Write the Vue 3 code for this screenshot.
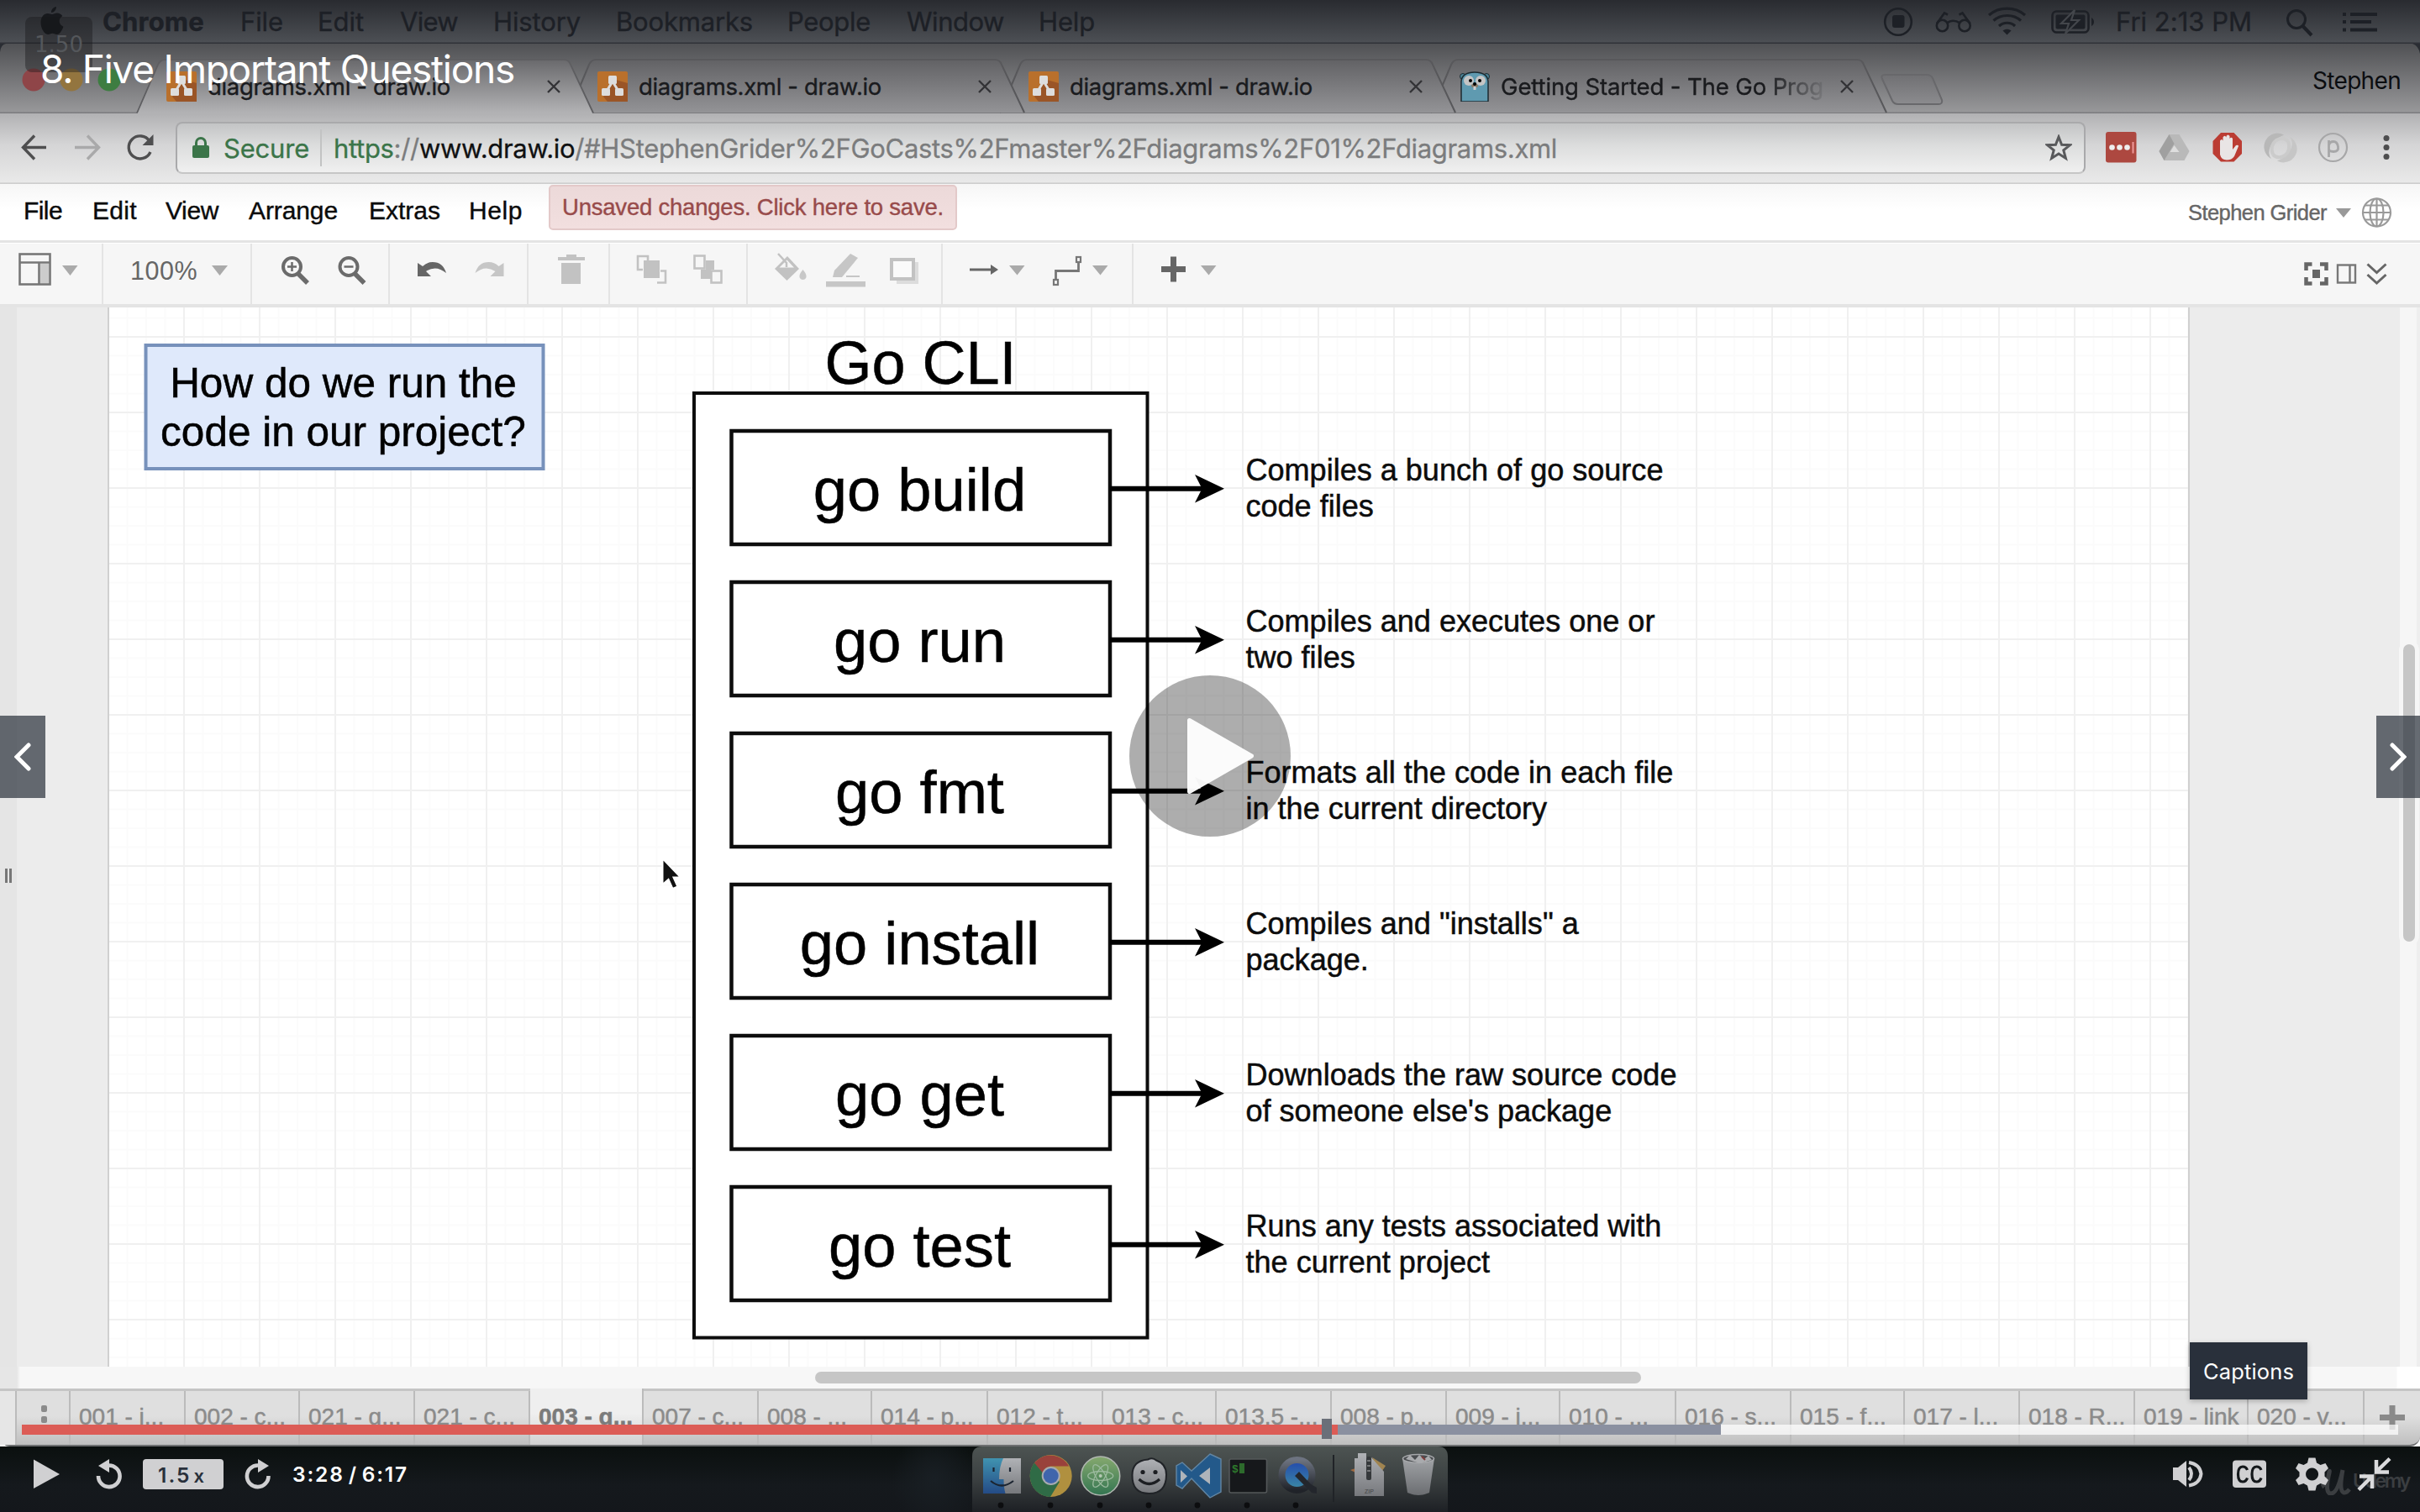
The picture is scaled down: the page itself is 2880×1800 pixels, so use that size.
<script setup>
// Sets the tracking of a label so that it spans the given width in pixels.
const vTrack = {
  mounted(el, { value }) {
    const natural = el.getBoundingClientRect().width
    el.style.letterSpacing = `${(value - natural) / el.textContent.length}px`
  },
}

const macMenus = [
  { label: 'Chrome', w: 164, t: 121, bold: true },
  { label: 'File', w: 92, t: 51 },
  { label: 'Edit', w: 98, t: 55 },
  { label: 'View', w: 111, t: 69 },
  { label: 'History', w: 146, t: 104 },
  { label: 'Bookmarks', w: 204, t: 163 },
  { label: 'People', w: 142, t: 99 },
  { label: 'Window', w: 157, t: 116 },
  { label: 'Help', w: 100, t: 67 },
]

const tabs = [
  { title: 'diagrams.xml - draw.io', t: 289, icon: 'drawio', w: 513 },
  { title: 'diagrams.xml - draw.io', t: 289, icon: 'drawio', w: 513 },
  { title: 'diagrams.xml - draw.io', t: 289, icon: 'drawio', w: 513 },
  { title: 'Getting Started - The Go Prog', t: 384, icon: 'gopher', w: 513, fade: true },
]

const appMenus = [
  { label: 'File', w: 82, t: 46 },
  { label: 'Edit', w: 87, t: 53 },
  { label: 'View', w: 99, t: 63 },
  { label: 'Arrange', w: 143, t: 106 },
  { label: 'Extras', w: 119, t: 85 },
  { label: 'Help', w: 92, t: 64 },
]

const commands = [
  { name: 'go build', info: ['Compiles a bunch of go source', 'code files'] },
  { name: 'go run', info: ['Compiles and executes one or', 'two files'] },
  { name: 'go fmt', info: ['Formats all the code in each file', 'in the current directory'] },
  { name: 'go install', info: ['Compiles and "installs" a', 'package.'] },
  { name: 'go get', info: ['Downloads the raw source code', "of someone else's package"] },
  { name: 'go test', info: ['Runs any tests associated with', 'the current project'] },
]

const sheets = [
  ['001 - i...', 137], ['002 - c...', 136], ['021 - g...', 137], ['021 - c...', 137],
  ['003 - g...', 135, true], ['007 - c...', 137], ['008 - ...', 135], ['014 - p...', 138],
  ['012 - t...', 137], ['013 - c...', 135], ['013.5 -...', 137], ['008 - p...', 137],
  ['009 - i...', 135], ['010 - ...', 138], ['016 - s...', 137], ['015 - f...', 135],
  ['017 - l...', 137], ['018 - R...', 137], ['019 - link', 135], ['020 - v...', 138],
]
const dockDots = [1191, 1250, 1309, 1367, 1425, 1484, 1542]
</script>

<template>
  <div class="player">
    <header class="macbar">
      <svg class="apple" viewBox="0 0 28 35"><path d="M19 1c.3 3.600-2.800 7-6 7-.3-3.400 2.600-6.600 6-7zM14 10c1.700 0 3.300-1.500 6-1.500 2.400 0 4.800 1.200 6.300 3.500-5.400 3.300-4.500 10.300 1.100 12.700C26 29 23 34 19.800 34c-2.200 0-2.900-1.300-5.400-1.300S11 34 9 34C4.600 34 .5 26.500.5 19.800.5 13 4.600 9 8.500 9c2.500 0 4 1 5.500 1z" /></svg>
      <div v-for="m in macMenus" :key="m.label" class="mac-item" :class="{ bold: m.bold }" :style="{ width: m.w + 'px' }">
        <span v-track="m.t">{{ m.label }}</span>
      </div>
      <svg class="status" viewBox="2240 0 260 50" fill="none" stroke="#1d2026" stroke-width="2.600">
        <circle cx="2259" cy="25" r="15.800" /><rect x="2252" y="17" width="14.500" height="15" rx="3" fill="#1d2026" stroke="none" />
        <circle cx="2311.500" cy="29.500" r="6.700" /><circle cx="2338" cy="29.500" r="6.700" />
        <path d="M2305 27 2314 14.500l4 2M2344.500 27 2335.500 14.500l-4 2M2318 26c3-3 10-3 13.500 0" />
        <path d="M2367 17c12-10.500 31-10.500 43 0M2372.500 23.500c9-8 23.500-8 32.500 0M2379 30c5.500-5 14-5 19 0" stroke-width="3.200" />
        <path d="M2383.500 35.500c3-2.500 7-2.500 10 0l-5 5z" fill="#1d2026" stroke="none" />
        <rect x="2442.500" y="12.500" width="43" height="25" rx="5" /><rect x="2446.500" y="16.500" width="35" height="17" rx="2" fill="#1d2026" stroke="none" />
        <path d="M2489 20c4 2 4 8 0 10z" fill="#1d2026" stroke="none" />
        <path d="M2469 11 2453 27h9l-4 12 16-16h-9z" fill="#1d2026" stroke="#43464b" stroke-width="2.200" />
      </svg>
      <div class="clock"><span v-track="162">Fri 2:13 PM</span></div>
      <svg class="status-end" viewBox="2720 0 112 50" fill="none" stroke="#1d2026" stroke-width="3">
        <circle cx="2733" cy="22" r="10.500" /><path d="M2740.500 30 2751 41" stroke-width="4" />
        <path d="M2788 16h4M2797 16h32M2788 25h4M2797 25h25M2788 34.500h4M2797 34.500h32" stroke-width="4" />
      </svg>
    </header>

    <div class="tabstrip">
      <svg class="tab-shapes" viewBox="0 52 2880 83">
        <defs>
          <linearGradient id="act" gradientUnits="userSpaceOnUse" x1="0" y1="70" x2="0" y2="135"><stop offset="0" stop-color="#68686b" /><stop offset="1" stop-color="#b3b3b5" /></linearGradient>
          <linearGradient id="ina" gradientUnits="userSpaceOnUse" x1="0" y1="70" x2="0" y2="135"><stop offset="0" stop-color="#616164" /><stop offset="1" stop-color="#949497" /></linearGradient>
        </defs>
        <path d="M0 52h7Q1 53 0 62zM2880 52h-9Q2878 54 2880 64z" fill="#2a2d33" />
        <path d="M0 134.500H2880" stroke="#7b7b7e" stroke-width="2" />
        <g stroke="#58585b" stroke-width="2" fill="url(#ina)">
          <path d="M1703 134 1727 77Q1730 71 1735 71H2210Q2216 71 2218 77L2245 134" />
          <path d="M1190 134 1214 77Q1217 71 1222 71H1697Q1703 71 1705 77L1732 134" />
          <path d="M677 134 701 77Q704 71 709 71H1184Q1190 71 1192 77L1219 134" />
          <path d="M2243 89H2293q5 0 7 4l11 26q1 5-4 5H2259q-5 0-7-4l-12-26q-2-5 3-5z" stroke="#68686b" />
        </g>
        <path d="M163 135.500 188 77Q191 71 196 71H671Q677 71 679 77L706 135.500z" fill="url(#act)" />
        <path d="M163 134.500 188 77Q191 71 196 71H671Q677 71 679 77L706 134.500" fill="none" stroke="#5e5e61" stroke-width="1.800" />
        <circle cx="40" cy="95" r="13.500" fill="#8f4548" /><circle cx="85" cy="95" r="13.500" fill="#93753f" /><circle cx="130" cy="95" r="13.500" fill="#3d7d41" />
      </svg>
      <div class="tabs">
        <div v-for="(tab, i) in tabs" :key="i" class="tab" :style="{ width: tab.w + 'px' }">
          <svg v-if="tab.icon === 'drawio'" class="fav" viewBox="0 0 36 36">
            <rect width="36" height="36" rx="2" fill="#b9702c" /><path d="M36 14v22H12l-5-6 15-20z" fill="#9a5527" />
            <path d="M18 12 10 25M18 12l8 13" stroke="#ddd" stroke-width="3" /><rect x="13" y="5" width="10" height="10" rx="1.500" fill="#ddd" /><rect x="5" y="20" width="10" height="9" rx="1.500" fill="#ddd" /><rect x="21" y="20" width="10" height="9" rx="1.500" fill="#ddd" />
          </svg>
          <svg v-else class="fav" viewBox="0 0 36 36">
            <circle cx="4" cy="6" r="3.500" fill="#4b8396" stroke="#1c2a30" /><circle cx="32" cy="6" r="3.500" fill="#4b8396" stroke="#1c2a30" />
            <path d="M2 36V12Q3 1 18 1t16 11v24z" fill="#5f9ab0" stroke="#1c2a30" stroke-width="1.500" />
            <circle cx="11" cy="11" r="6" fill="#c5c5c5" /><circle cx="25" cy="11" r="6" fill="#c5c5c5" /><circle cx="13" cy="11" r="2" /><circle cx="24" cy="11" r="2" />
            <ellipse cx="18" cy="17" rx="4" ry="2.500" fill="#8b7c6b" /><circle cx="18" cy="15" r="2" /><rect x="16.500" y="18" width="3" height="4" fill="#ccc" />
          </svg>
          <div class="tab-title" :class="{ fade: tab.fade }"><span v-track="tab.t">{{ tab.title }}</span></div>
          <svg class="close" viewBox="0 0 16 16"><path d="M1 1 15 15M15 1 1 15" stroke="#333336" stroke-width="2.400" /></svg>
        </div>
      </div>
      <div class="profile"><span v-track="105">Stephen</span></div>
    </div>

    <div class="address">
      <svg class="nav" viewBox="20 135 170 82" fill="none">
        <path d="M55 175.500H29M41 161.500 27.500 175.500 41 189.500" stroke="#4f4f50" stroke-width="3.400" />
        <path d="M89 175.500h27M104 161.500 117.500 175.500 104 189.500" stroke="#a9a9aa" stroke-width="3.400" />
        <path d="M178 168a13.500 13.500 0 1 0 1 13" stroke="#4f4f50" stroke-width="3.400" /><path d="M182.500 160v13h-13z" fill="#4f4f50" />
      </svg>
      <div class="field">
        <svg class="lock" viewBox="0 0 20 26"><path d="M4.500 12V7a5.500 5.500 0 0 1 11 0v5" fill="none" stroke="#3b7549" stroke-width="3" /><rect y="10" width="20" height="15" rx="2" fill="#3b7549" /></svg>
        <div class="secure"><span v-track="102">Secure</span></div>
        <div class="url"><span v-track="1456"><b class="g">https</b>://<b class="k">www.draw.io</b>/#HStephenGrider%2FGoCasts%2Fmaster%2Fdiagrams%2F01%2Fdiagrams.xml</span></div>
        <svg class="star" viewBox="0 0 32 32"><path d="M16 3l3.600 9.200 9.900.5-7.700 6.200 2.600 9.600L16 23.100 7.600 28.500l2.600-9.600L2.500 12.700l9.900-.5z" fill="none" stroke="#58595b" stroke-width="3" /></svg>
      </div>
      <svg class="exts" viewBox="2500 135 350 82">
        <rect x="2506" y="157" width="36.500" height="36.500" rx="3" fill="#ad4840" /><g fill="#eee"><circle cx="2513.500" cy="175.500" r="3.300" /><circle cx="2522.500" cy="175.500" r="3.300" /><circle cx="2531.500" cy="175.500" r="3.300" /></g><path d="M2538.500 169v13.500" stroke="#e99" stroke-width="2" />
        <path d="M2581.500 160h12l12 20-6 11h-24l-6-11z" fill="#b9b9b9" /><path d="M2581.500 160 2587.500 171 2575.500 191 2569.500 180z" fill="#a0a0a0" /><path d="M2587.500 173l6 8h-11z" fill="#dedede" />
        <path d="M2643 158h15.500l9.500 10v15l-9.500 9.500H2643l-9.500-9.500v-15z" fill="#bb3c33" />
        <path d="M2642 184v-16.500q2-3 3.500 0v-4q2-3.500 4 0v-1.500q2-3 4 0v3q2-2.500 3.500 0V178l4-5q3-1 3 1l-5 12q-3 4.500-9 4.500-6.500 0-8-6.500z" fill="#e9e5e5" />
        <path d="M2718 160.500a15.500 15.500 0 0 0-15 28.500q-5-6-1-15 4-8 16-13.500z" fill="#b8b8b8" /><path d="M2710 191.500a15.500 15.500 0 0 0 15-28.500q5 6 1 15-4 8-16 13.500z" fill="#c6c6c6" /><path d="M2705 184q-4-11 4-17 8-5 14 1M2723 168q4 11-4 17-8 5-14-1" fill="none" stroke="#cbcbcb" stroke-width="4" />
        <circle cx="2776.500" cy="175.500" r="16.500" fill="none" stroke="#a7a7a8" stroke-width="2.200" />
        <path d="M2771.500 187v-20M2771.500 173q1-4.500 5.500-4.500t5.500 6-5.500 6-5.500-4.500" fill="none" stroke="#a7a7a8" stroke-width="2.800" />
        <g fill="#4d4d4e"><circle cx="2840" cy="164.500" r="3.500" /><circle cx="2840" cy="175.500" r="3.500" /><circle cx="2840" cy="186.500" r="3.500" /></g>
      </svg>
    </div>

    <div class="appmenu">
      <div v-for="m in appMenus" :key="m.label" class="app-item" :style="{ width: m.w + 'px' }"><span v-track="m.t">{{ m.label }}</span></div>
      <div class="unsaved"><span v-track="454">Unsaved changes. Click here to save.</span></div>
      <div class="user"><span v-track="165">Stephen Grider</span></div>
      <svg class="globe" viewBox="2778 234 70 40"><path d="M2779 249h18l-9 11z" fill="#999" />
        <g fill="none" stroke="#9a9a9a" stroke-width="2.200"><circle cx="2827.500" cy="254" r="16.500" /><ellipse cx="2827.500" cy="254" rx="8" ry="16.500" /><path d="M2827.500 237v34M2811 254h33M2813.500 245.500h28M2813.500 262.500h28" /></g></svg>
    </div>

    <div class="toolbar">
      <svg style="width: 123px" viewBox="0 290 123 72"><g fill="none" stroke="#777" stroke-width="2.600"><rect x="23.500" y="302.500" width="36" height="36" /><path d="M23 312.500h37M46.500 312v27" /></g><path d="M48 314h10v23H48z" fill="#ccc" /><path d="M74 316h18.500l-9 12z" fill="#aaa" /></svg>
      <div class="zoom"><span v-track="80">100%</span><svg viewBox="0 0 19 12"><path d="M0 0h19l-9.500 12z" fill="#aaa" /></svg></div>
      <svg style="width: 164px" viewBox="300 290 164 72" fill="none" stroke="#6b6b6b">
        <circle cx="347.500" cy="317.500" r="10.500" stroke-width="4" /><path d="M355 326 366 337" stroke-width="5.500" /><path d="M342 317.500h11M347.500 312v11" stroke-width="2.500" />
        <circle cx="415" cy="317.500" r="10.500" stroke-width="4" /><path d="M422.500 326 433.500 337" stroke-width="5.500" /><path d="M409.500 317.500h11" stroke-width="2.500" />
      </svg>
      <svg style="width: 165px" viewBox="464 290 165 72">
        <path d="M497 313v16h16l-6-6q12-8 24 2-4-13-16-13-7 0-12 5z" fill="#666" /><path d="M599.500 313v16h-16l6-6q-12-8-24 2 4-13 16-13 7 0 12 5z" fill="#c6c6c6" />
      </svg>
      <svg style="width: 97px" viewBox="629 290 97 72" fill="#c2c2c2"><path d="M674 306v-3h12v3h10v4h-32v-4zM668 313h23v25h-23z" /></svg>
      <svg style="width: 164px" viewBox="726 290 164 72">
        <g fill="none" stroke="#c2c2c2" stroke-width="2.600"><path d="M765 321h-6v-16h12v5M782 336.500h10v-14h-6" /><rect x="826.500" y="304.500" width="12" height="15" /><rect x="846.500" y="322.500" width="12" height="14" /></g>
        <rect x="766" y="310" width="19" height="21" fill="#c2c2c2" /><path d="M840 310h10v11h-4v11h-12v-11h6z" fill="#c2c2c2" />
      </svg>
      <svg style="width: 232px" viewBox="890 290 232 72">
        <path d="M937 305 951 320 936.500 334 922 320z" fill="#c2c2c2" /><path d="M936.500 309.500 945 318.500H927.500z" fill="#f6f6f6" /><path d="M926 302 936 313v5" fill="none" stroke="#c2c2c2" stroke-width="2.500" /><path d="M955.500 321q5 6 4 9t-4 3-4-3 4-9z" fill="#c8c8c8" />
        <path d="M1012 302 1021 307 1002 330 991 330 993 322z" fill="#c6c6c6" /><path d="M983 335h47v6.500h-47zM1007 328h16v2h-16z" fill="#c6c6c6" />
        <path d="M1067 312h26v26h-26z" fill="#dcdcdc" /><rect x="1061" y="309" width="26" height="23" fill="#fafafa" stroke="#c2c2c2" stroke-width="4" />
      </svg>
      <svg style="width: 227px" viewBox="1122 290 227 72">
        <path d="M1154 321h26" stroke="#666" stroke-width="3" /><path d="M1188 321l-9-6v12z" fill="#666" /><path d="M1201 316h18.500l-9 11.500zM1300 316h18.500l-9 11.500z" fill="#aaa" />
        <path d="M1256.500 333v-10.500h27V312" fill="none" stroke="#777" stroke-width="2.800" /><g fill="#f6f6f6" stroke="#777" stroke-width="2.200"><rect x="1254" y="333" width="5" height="6" /><rect x="1281" y="306" width="5" height="6" /></g>
      </svg>
      <svg class="plain" style="width: 120px" viewBox="1349 290 120 72"><path d="M1382 320.500h29M1396.500 305.500v30" stroke="#666" stroke-width="7" /><path d="M1429 316h18.500l-9 11.500z" fill="#aaa" /></svg>
      <svg class="plain right" viewBox="2740 290 140 72">
        <g fill="none" stroke="#666" stroke-width="4.500"><path d="M2744.500 322v-7.500h7M2761 314.500h7.500v7.500M2768.500 330v7.500h-7.500M2751.500 337.500h-7v-7.500" /></g><rect x="2752" y="321" width="9" height="10" fill="#666" />
        <g fill="none" stroke="#777" stroke-width="2.400"><rect x="2782" y="315.500" width="21" height="21" /><path d="M2796.500 315v22" /></g><path d="M2817.500 314.500l11 10 11-10M2817.500 327l11 10 11-10" fill="none" stroke="#666" stroke-width="3" />
      </svg>
    </div>

    <main class="workspace">
      <div class="gutter"><i></i><i></i></div>
      <div class="margin"></div>
      <div class="page">
        <svg class="diagram" viewBox="130 366 2474 1261">
          <rect x="173.500" y="411" width="473" height="147" fill="#dfe9fb" stroke="#7791bb" stroke-width="4" />
          <g font-size="49.500" text-anchor="middle"><text x="408.500" y="472.500">How do we run the</text><text x="408.500" y="531">code in our project?</text></g>
          <rect x="826" y="468" width="539.500" height="1124.500" fill="#fff" stroke="#0d0d0d" stroke-width="4" />
          <text x="1095.500" y="456.500" font-size="72" text-anchor="middle">Go CLI</text>
          <g v-for="(c, i) in commands" :key="c.name" :transform="`translate(0 ${i * 180})`">
            <rect x="870.500" y="513" width="450.500" height="135" fill="#fff" stroke="#0d0d0d" stroke-width="4.500" />
            <text x="1094.500" y="608" font-size="72.300" text-anchor="middle">{{ c.name }}</text>
            <path d="M1321 581.800h110" stroke="#000" stroke-width="6" /><path d="M1457 581.800 1422 598.500 1430.500 581.800 1422 565z" />
            <g font-size="36.060" class="note"><text x="1482.500" y="571.800">{{ c.info[0] }}</text><text x="1482.500" y="614.800">{{ c.info[1] }}</text></g>
          </g>
          <path d="M788.500 1022v31l7-6 5 11 6-2.500-5-11h8.500z" fill="#111" stroke="#fff" stroke-width="2" />
        </svg>
      </div>
      <div class="margin wide"></div>
      <div class="vscroll"><div class="vthumb"></div></div>
    </main>
    <div class="hscroll"><div class="hthumb"></div></div>

    <nav class="sheets">
      <div class="sheet-menu"><i></i><i></i></div>
      <div v-for="(s, i) in sheets" :key="i" class="sheet" :class="{ active: s[2] }" :style="{ width: s[1] + 'px' }">{{ s[0] }}</div>
      <svg class="add" viewBox="0 0 66 66"><path d="M18 31.500h30M33 17v29" stroke="#8a8a8a" stroke-width="7" /></svg>
    </nav>

    <footer class="desktop">
      <svg class="dock" viewBox="1157 1722 566 78">
        <defs>
          <linearGradient id="dk" x1="0" y1="0" x2="0" y2="1"><stop offset="0" stop-color="#4d5452" /><stop offset=".5" stop-color="#3b4041" /><stop offset="1" stop-color="#1d2024" /></linearGradient>
          <linearGradient id="fb" x1="0" y1="0" x2="0" y2="1"><stop offset="0" stop-color="#4093b0" /><stop offset="1" stop-color="#244b86" /></linearGradient>
          <linearGradient id="at" x1="0" y1="0" x2="0" y2="1"><stop offset="0" stop-color="#86a96f" /><stop offset="1" stop-color="#337551" /></linearGradient>
          <linearGradient id="gr" x1="0" y1="0" x2="0" y2="1"><stop offset="0" stop-color="#b0b2b6" /><stop offset="1" stop-color="#76787c" /></linearGradient>
          <linearGradient id="qt" x1="0" y1="0" x2="0" y2="1"><stop offset="0" stop-color="#6d7380" /><stop offset="1" stop-color="#202329" /></linearGradient>
          <linearGradient id="qi" x1="0" y1="0" x2="0" y2="1"><stop offset="0" stop-color="#2347ad" /><stop offset="1" stop-color="#3c8ca4" /></linearGradient>
        </defs>
        <path d="M1157 1800v-66q0-12 12-12h542q12 0 12 12v66z" fill="url(#dk)" />
        <rect x="1170" y="1736" width="45" height="42" fill="url(#fb)" /><path d="M1194 1736h21v42h-18.500q-2-7-2-17h-5.500q0-15 5-25z" fill="url(#gr)" />
        <path d="M1182.500 1747v5M1202 1747v5M1179 1763q13 11 27 0" fill="none" stroke="#1b2430" stroke-width="2.200" />
        <circle cx="1250.700" cy="1757" r="25" fill="#b0903f" /><path d="M1250.700 1757 1231 1741.500a25 25 0 0 0 19 40.500l11-18z" fill="#2f6b46" /><path d="M1231 1741.500a25 25 0 0 1 41 4h-22q-7 1-9 8z" fill="#99413b" /><circle cx="1250.700" cy="1757" r="11" fill="#a7aab0" /><circle cx="1250.700" cy="1757" r="9" fill="#3f65ac" />
        <circle cx="1309.700" cy="1757" r="23" fill="url(#at)" stroke="#b0b7b0" stroke-width="1.600" /><g fill="none" stroke="#9dbba0" stroke-width="1.300"><ellipse cx="1309.700" cy="1757" rx="15" ry="5.500" /><ellipse cx="1309.700" cy="1757" rx="15" ry="5.500" transform="rotate(60 1309.700 1757)" /><ellipse cx="1309.700" cy="1757" rx="15" ry="5.500" transform="rotate(120 1309.700 1757)" /></g><circle cx="1309.700" cy="1757" r="2" fill="#b5c9b5" />
        <path d="M1366 1737.500q6-3 10 1 12 4 12 17 0 22.500-20.500 22.500T1347.500 1756q0-17 18.500-18.500z" fill="url(#gr)" stroke="#202327" stroke-width="2" /><circle cx="1360" cy="1752.500" r="2.600" fill="#1c1e22" /><circle cx="1375" cy="1752.500" r="2.600" fill="#1c1e22" /><path d="M1355.500 1761q12 11 24.500 0" fill="none" stroke="#1c1e22" stroke-width="3.200" />
        <path d="M1440 1731l13 6v39l-13 7-22-23-11 12-7-4v-23l7-4 11 10z" fill="#23598a" stroke="#6286a4" stroke-width="1.400" /><path d="M1405 1750v15l8-7.500zM1440 1747v20l-13-10z" fill="#afb4ba" />
        <rect x="1463" y="1737" width="44.500" height="40" rx="2" fill="#16181b" stroke="#54585a" stroke-width="1.600" /><text x="1466" y="1753" class="term">$</text><rect x="1475" y="1742" width="6" height="12" fill="#2d6b2c" />
        <circle cx="1543.500" cy="1756" r="18" fill="url(#qi)" stroke="url(#qt)" stroke-width="8" /><path d="M1541 1757l20 20 6 1v-7l-7-4-14-15z" fill="#23262c" />
        <path d="M1587 1732v56" stroke="#202327" stroke-width="2" />
        <path d="M1633 1735l16 10-8 12z" fill="#a08450" /><path d="M1607 1750l6-2v5z" fill="#a06a40" /><path d="M1612 1736h4v-6h10v5h6l15 17v29h-35z" fill="url(#gr)" /><rect x="1626" y="1734" width="6" height="28" rx="2" fill="#35383b" /><path d="M1627 1739h4M1627 1745h4M1627 1751h4" stroke="#8a8c8e" stroke-width="1.400" /><text x="1624" y="1778" class="zip">ZIP</text>
        <path d="M1669 1736h38l-6 41q-13 6-26 0z" fill="url(#gr)" opacity=".85" /><ellipse cx="1688" cy="1736.500" rx="18.500" ry="5" fill="#4a4d50" stroke="#a5a7aa" stroke-width="1.600" /><path d="M1673 1737l5-5 6 6 5-6 6 5 5-4 4 5-14 4z" fill="#a9abae" /><path d="M1692 1734l4 4" stroke="#7d3c3c" stroke-width="2" />
        <circle v-for="x in dockDots" :key="x" :cx="x" cy="1792" r="3.400" fill="#0c0d0f" />
      </svg>
    </footer>

    <!-- video player overlay -->
    <div class="speed-badge"><span v-track="58">1.50</span></div>
    <h1 class="title"><span v-track="564">8. Five Important Questions</span></h1>
    <svg class="bigplay" viewBox="0 0 192 192"><circle cx="96" cy="96" r="96" fill="rgba(0,0,0,.32)" /><path d="M71.500 53.500 145.500 96 71.500 138.500z" fill="#fff" stroke="#fff" stroke-width="5" stroke-linejoin="round" opacity=".96" /></svg>
    <button class="side prev"><svg viewBox="0 0 20 34"><path d="M17 3 3 17 17 31" /></svg></button>
    <button class="side next"><svg viewBox="0 0 20 34"><path d="M3 3 17 17 3 31" /></svg></button>
    <div class="tooltip"><span v-track="108">Captions</span></div>
    <div class="progress"><div class="buffered"></div><div class="played"></div><div class="handle"></div></div>

    <div class="controls">
      <svg style="width: 130px" viewBox="40 1722 130 66">
        <path d="M40 1737.500 71 1755 40 1772z" fill="#d0d0d2" />
        <path d="M117 1757a12.800 12.800 0 1 0 12.500-12.500" fill="none" stroke="#d0d0d2" stroke-width="4.600" /><path d="M130 1737v16l-13-8z" fill="#d0d0d2" />
      </svg>
      <div class="rate"><span v-track="57">1.5<small>x</small></span></div>
      <svg style="width: 82px" viewBox="266 1722 82 66">
        <path d="M319.500 1757a12.800 12.800 0 1 1-12.500-12.500" fill="none" stroke="#d0d0d2" stroke-width="4.600" /><path d="M307 1737v16l13-8z" fill="#d0d0d2" />
      </svg>
      <div class="time"><span v-track="138">3:28 / 6:17</span></div>
      <div class="udemy"><svg viewBox="0 0 40 34"><path d="M3 24q7-4 9-18 1-3-1 6-4 20 3 20 8 0 14-28-4 22 0 26 3 3 8-3" fill="none" stroke="#3b3e41" stroke-width="5" /></svg><span v-track="67">Udemy</span></div>
      <svg class="icons" viewBox="2580 1722 270 66">
        <path d="M2586 1747h6l10-8v31l-10-8h-6z" fill="#d0d0d2" /><g fill="none" stroke="#d0d0d2"><path d="M2605 1747q6 7.500 0 15" stroke-width="4" /><path d="M2605 1741q13 2 14.500 13.500-1.500 12-14.500 14" stroke-width="4" /></g>
        <rect x="2657" y="1738.500" width="40" height="32.500" rx="4" fill="#d0d0d2" /><path d="M2674.500 1750q-1.500-4-5.500-4-5.500 0-5.500 9t5.500 9q4 0 5.500-4.500M2691 1750q-1.500-4-5.500-4-5.500 0-5.500 9t5.500 9q4 0 5.500-4.500" fill="none" stroke="#14181b" stroke-width="3.200" />
        <path fill-rule="evenodd" d="M2747.500 1735.500h8l1.500 6 4.500 2.500 6-2 3.500 6-4.500 4.500v5l4.500 4.500-3.500 6-6-2-4.500 2.500-1.500 6h-8l-1.500-6-4.500-2.500-6 2-3.500-6 4.500-4.500v-5l-4.500-4.500 3.500-6 6 2 4.500-2.500zM2751.500 1747.500a7.500 7.500 0 1 0 .1 0z" fill="#d0d0d2" />
        <g fill="none" stroke="#dadadc" stroke-width="4.500"><path d="M2844 1736.500 2829 1751M2828 1738v14.500h15M2807 1773.500 2822 1758.500M2808 1757.500h15V1772" /></g>
      </svg>
    </div>
  </div>
</template>

<style>
html, body { margin: 0; background: #000; }
</style>

<style scoped>
.player { position: relative; width: 2880px; height: 1800px; overflow: hidden; display: flex; flex-direction: column; background: #fff; font-family: Inter, "Liberation Sans", sans-serif; white-space: nowrap; }
.player > * { flex: none; box-sizing: border-box; }
svg { display: block; flex: none; }

.macbar { height: 52px; display: flex; align-items: center; padding-bottom: 1px; background: linear-gradient(#292b30, #4c4f54 50px, #303238 51px); color: #1d2026; font-size: 31px; line-height: 50px; }
.apple { width: 28px; height: 35px; margin: 0 46px 3px 48px; fill: #17191d; }
.mac-item { flex: none; -webkit-text-stroke: .4px #1d2026; }
.mac-item.bold { font-weight: 700; }
.status { width: 260px; height: 50px; margin-left: 904px; }
.clock { width: 202px; margin-left: 18px; -webkit-text-stroke: .4px #1d2026; }
.status-end { width: 112px; height: 50px; }

.tabstrip { position: relative; height: 83px; background: linear-gradient(#505154, #99999b); display: flex; }
.tab-shapes { position: absolute; inset: 0; width: 2880px; height: 83px; }
.tabs { position: relative; display: flex; margin: 19px 0 0 198px; width: 2052px; height: 64px; }
.tab { display: flex; align-items: center; color: #1a1b1e; font-size: 27.500px; }
.fav { width: 36px; height: 36px; margin-right: 13px; }
.tab-title { width: 404px; overflow: hidden; line-height: 40px; -webkit-text-stroke: .4px #1a1b1e; }
.tab-title.fade { -webkit-mask-image: linear-gradient(90deg, #000 315px, transparent 392px); mask-image: linear-gradient(90deg, #000 315px, transparent 392px); }
.close { width: 16px; height: 16px; }
.profile { position: relative; margin: 24px 0 0 502px; height: 40px; line-height: 40px; font-size: 28px; color: #0b0d10; }

.address { height: 84px; display: flex; align-items: center; padding-left: 20px; padding-bottom: 2px; background: linear-gradient(#b1b1b3, #d5d5d6 45%, #e9e9e9 82px, #c6c6c6 83px); border-bottom: 1px solid #cdcdcd; }
.nav { width: 170px; height: 82px; margin-right: 19px; }
.field { box-sizing: border-box; width: 2273px; height: 62px; border: 2px solid #a9a9ab; border-bottom-color: #c6c6c6; border-radius: 8px; display: flex; align-items: center; padding-left: 18px; background: linear-gradient(#c3c4c5, #dcdddd 45%, #f0f0f0); font-size: 31px; line-height: 40px; -webkit-text-stroke: .3px; }
.lock { width: 20px; height: 26px; margin-right: 17px; }
.secure { box-sizing: border-box; width: 117px; height: 44px; border-right: 2px solid #c2c3c3; color: #3b7549; line-height: 45px; }
.url { width: 2037px; margin-left: 14px; padding-top: 3px; color: #7b7c7d; }
.url b { font-weight: 400; }
.url .g { color: #3b7549; }
.url .k { color: #101112; }
.star { width: 32px; height: 32px; }
.exts { width: 350px; height: 82px; margin-left: 18px; }

.appmenu { height: 70px; display: flex; align-items: center; padding: 0 0 4px 28px; background: linear-gradient(#f6f6f6, #fff 30px); border-bottom: 3px solid #e4e4e4; font-family: "Liberation Sans", sans-serif; font-size: 30px; color: #0b0b0b; -webkit-text-stroke: .4px; }
.app-item { flex: none; line-height: 36px; }
.unsaved { box-sizing: border-box; width: 486px; height: 54px; margin: -7px 0 0 3px; padding-left: 14px; border: 2px solid #e3c9c9; border-radius: 5px; background: linear-gradient(#ecd9d9, #f2dfdf); color: #984b4b; font-size: 27.500px; line-height: 50px; }
.user { width: 175px; margin: 6px 0 0 1465px; font-size: 25.500px; color: #666; }
.globe { width: 70px; height: 40px; margin-top: 5px; }

.toolbar { height: 77px; display: flex; background: #f6f6f6; border-top: 1px solid #fff; border-bottom: 4px solid #e4e4e4; }
.toolbar > svg { height: 72px; box-shadow: inset -2px 0 #e4e4e4; }
.toolbar > .plain { box-shadow: none; }
.toolbar > .right { width: 140px; margin-left: 1271px; }
.zoom { box-sizing: border-box; width: 177px; display: flex; align-items: center; padding: 0 0 8px 32px; font: 30.500px "Liberation Sans", sans-serif; color: #666; box-shadow: inset -2px 0 #e4e4e4; }
.zoom svg { width: 19px; height: 12px; margin-left: 17px; }

.workspace { height: 1261px; display: flex; background: #ececec; }
.gutter { width: 20px; height: 1261px; background: #e5e5e5; display: flex; gap: 2px; padding: 668px 0 0 6px; box-sizing: border-box; }
.gutter i { width: 3px; height: 17px; background: #777; }
.margin { box-sizing: border-box; width: 110px; border-right: 2px solid #d0d0d0; }
.margin.wide { width: 252px; border-right: 0; border-left: 2px solid #d0d0d0; }
.page { width: 2474px; background-color: #fff; background-image: linear-gradient(90deg, #f0f0f0 2px, transparent 2px), linear-gradient(#f0f0f0 2px, transparent 2px), linear-gradient(90deg, #fbfbfb 2px, transparent 2px), linear-gradient(#fbfbfb 2px, transparent 2px); background-size: 90px 90px, 90px 90px, 22.500px 22.500px, 22.500px 22.500px; background-position: 88px 0, 0 34px, 20.500px 0, 0 11.500px; }
.diagram { width: 2474px; height: 1261px; font-family: "Liberation Sans", sans-serif; }
.diagram text { stroke: #000; stroke-width: .5px; }
.note text { fill: #0c0c0c; stroke: #0c0c0c; }
.vscroll { width: 24px; box-sizing: border-box; padding: 401px 0 0 4px; background: linear-gradient(90deg, #f6f6f6 20px, #eee 20px); }
.vthumb { width: 14px; height: 354px; border-radius: 7px; background: #c6c6c6; box-shadow: 0 0 0 5px #f6f6f6; }
.hscroll { height: 26px; box-sizing: border-box; padding: 6px 0 0 970px; background: linear-gradient(90deg, #e6e6e6 20px, #f7f7f7 24px, #f7f7f7 2852px, #fff 2853px); }
.hthumb { width: 983px; height: 14px; border-radius: 7px; background: #c6c6c6; }

.sheets { height: 69px; display: flex; background: linear-gradient(#dfdfdf 30px, #bdbdbd 66px); border-top: 3px solid #c5c5c5; border-bottom: 2px solid #6d6f70; font: 28px/62px "Liberation Sans", sans-serif; color: #8b8b8b; -webkit-text-stroke: .5px; border-radius: 0 0 12px 12px; }
.sheet-menu { box-sizing: border-box; width: 84px; border: 2px solid #bbb; border-width: 0 2px 0 0; display: flex; flex-direction: column; align-items: center; gap: 5px; padding: 17px 0 0 22px; background: linear-gradient(90deg, #e6e6e6 18px, #bbb 18px, #bbb 20px, transparent 20px); }
.sheet-menu i { width: 7px; height: 8px; border-radius: 2px; background: #8b8b8b; }
.sheet { box-sizing: border-box; overflow: hidden; border-right: 2px solid #bbb; padding-left: 10px; height: 64px; }
.sheet.active { background: linear-gradient(#efefef 30px, #d2d2d2 66px); margin-top: -3px; height: 67px; line-height: 68px; font-weight: 700; color: #7b7b7b; }
.add { width: 66px; height: 66px; }

.desktop { height: 78px; padding-left: 1157px; background: radial-gradient(50px 60px at 1112px 40px, #191f24, transparent), linear-gradient(#0b100f, #15191d 60%, #14171b); }
.dock { width: 566px; height: 78px; }
.term { font: bold 13px "Liberation Mono", monospace; fill: #2d7a2c; }
.zip { font: 7px "Liberation Sans", sans-serif; fill: #444; }

.speed-badge { position: absolute; left: 30px; top: 20px; width: 80px; height: 66px; padding-left: 11px; border-radius: 8px; background: rgba(22, 23, 26, .4); color: #54575b; font: 26px/66px "DejaVu Sans", sans-serif; }
.title { position: absolute; left: 48px; top: 52px; margin: 0; color: #fff; font-size: 46px; font-weight: 400; line-height: 60px; }
.bigplay { position: absolute; left: 1344px; top: 804px; width: 192px; height: 192px; }
.side { position: absolute; top: 852px; width: 54px; height: 98px; border: 0; padding: 0; background: rgba(41, 48, 59, .7); display: flex; align-items: center; }
.side svg { width: 20px; height: 34px; fill: none; stroke: #fff; stroke-width: 5; stroke-linecap: round; }
.prev { left: 0; padding-left: 17px; }
.next { left: 2828px; width: 52px; padding-left: 16px; }
.tooltip { position: absolute; left: 2606px; top: 1598px; width: 140px; height: 68px; padding-left: 16px; background: #29303b; color: #fff; font-size: 25.500px; line-height: 70px; box-shadow: 0 2px 6px rgba(0, 0, 0, .25); }
.progress { position: absolute; left: 26px; top: 1696px; width: 2828px; height: 12px; background: rgba(255, 255, 255, .72); }
.buffered { position: absolute; inset: 0 auto 0 0; width: 2022px; background: #8a90a0; }
.played { position: absolute; inset: 0 auto 0 0; width: 1566px; background: #dc5c56; }
.handle { position: absolute; left: 1547px; top: -7px; width: 12px; height: 24px; background: #6a6f79; }

.controls { position: absolute; left: 40px; top: 1722px; width: 2840px; height: 66px; display: flex; align-items: center; }
.rate { box-sizing: border-box; width: 96px; height: 36px; margin-top: -1px; padding-left: 18px; border-radius: 4px; background: #d0d0d2; color: #29303b; font-size: 24.500px; font-weight: 600; line-height: 38px; }
.rate small { font-size: 22px; margin-left: 3px; }
.time { color: #fff; font-size: 24.500px; font-weight: 600; line-height: 66px; word-spacing: -3px; }
.icons { position: absolute; left: 2540px; top: 0; width: 270px; height: 66px; }
.udemy { position: absolute; left: 2720px; top: 24px; display: flex; align-items: center; color: #3b3e41; font-size: 23px; font-weight: 600; }
.udemy svg { width: 40px; height: 34px; }
</style>
